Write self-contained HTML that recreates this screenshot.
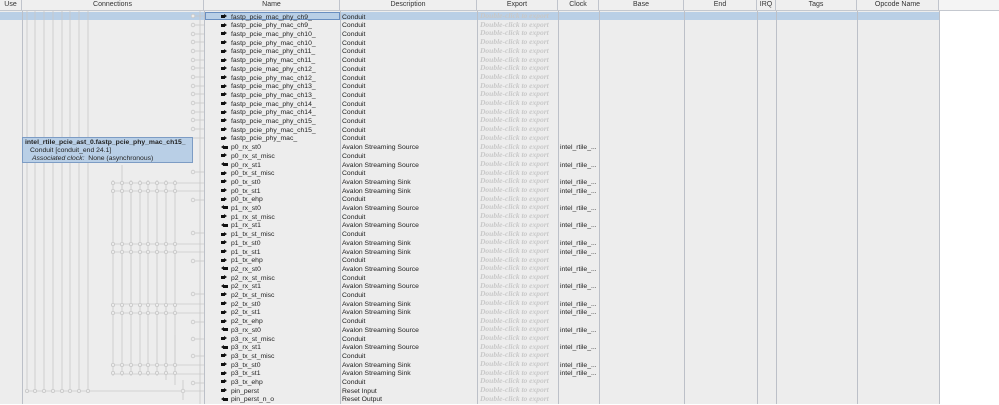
<!DOCTYPE html>
<html><head><meta charset="utf-8"><style>
*{margin:0;padding:0;box-sizing:border-box}
body{width:999px;height:404px;overflow:hidden;background:#fff;font-family:"Liberation Sans","DejaVu Sans",sans-serif;position:relative}
#grid{position:absolute;left:0;top:0;width:939px;height:404px;background:#ededed}
.hdr{position:absolute;top:0;height:11px;background:#efefef;border-bottom:1px solid #c4c8cf;font-size:7px;color:#333;text-align:center;line-height:10px;border-right:1px solid #c0c4cc}
.vl{position:absolute;top:11px;bottom:0;width:1px;background:#bcc0c8}
.r{position:absolute;left:0;width:939px;height:8.7px;font-size:6.8px;line-height:8.7px;color:#222;white-space:nowrap}
.r span{position:absolute;top:2.2px}
.n{left:231px}.d{left:342px}.r span.e{top:0.6px;left:480px;color:#c8c8c8;font-style:italic;font-weight:bold;font-family:"Liberation Serif",serif;font-size:7.5px}.c{left:560px}
.ic{position:absolute;left:221px;top:2.5px;width:7px;height:5px}
.ic::before,.ic::after{content:"";position:absolute}
.ic.o::before{left:0;top:1px;width:4px;height:3px;background:#111}
.ic.o::after{left:3px;top:0;border-left:3px solid #111;border-top:2.5px solid transparent;border-bottom:2.5px solid transparent}
.ic.i::before{left:2px;top:1px;width:5px;height:3px;background:#111}
.ic.i::after{left:0;top:0;border-right:3px solid #111;border-top:2.5px solid transparent;border-bottom:2.5px solid transparent}
</style></head><body>
<div id="grid"></div>
<div class="hdr" style="left:0;width:22px">Use</div>
<div class="hdr" style="left:22px;width:182px">Connections</div>
<div class="hdr" style="left:204px;width:136px">Name</div>
<div class="hdr" style="left:340px;width:137px">Description</div>
<div class="hdr" style="left:477px;width:81px">Export</div>
<div class="hdr" style="left:558px;width:41px">Clock</div>
<div class="hdr" style="left:599px;width:85px">Base</div>
<div class="hdr" style="left:684px;width:73px">End</div>
<div class="hdr" style="left:757px;width:19px">IRQ</div>
<div class="hdr" style="left:776px;width:81px">Tags</div>
<div class="hdr" style="left:857px;width:82px">Opcode Name</div>
<div class="hdr" style="left:939px;width:60px;border-right:none;background:#f4f4f4"></div>
<div style="position:absolute;left:0;top:11.5px;width:939px;height:8.7px;background:#b9cfe6"></div>
<div style="position:absolute;left:205px;top:11.5px;width:135px;height:8.7px;border:1px solid #6a8fc0"></div>
<div class="vl" style="left:22px"></div><div class="vl" style="left:204px"></div><div class="vl" style="left:340px"></div><div class="vl" style="left:477px"></div><div class="vl" style="left:558px"></div><div class="vl" style="left:599px"></div><div class="vl" style="left:684px"></div><div class="vl" style="left:757px"></div><div class="vl" style="left:776px"></div><div class="vl" style="left:857px"></div><div class="vl" style="left:939px"></div>
<svg style="position:absolute;left:0;top:0" width="210" height="404" stroke="#c8c8c8" fill="#ececec" stroke-width="0.8">
<g>
<line x1="27" y1="11" x2="27" y2="391"/><line x1="35" y1="11" x2="35" y2="391"/><line x1="44" y1="11" x2="44" y2="391"/><line x1="53" y1="11" x2="53" y2="391"/><line x1="62" y1="11" x2="62" y2="391"/><line x1="70" y1="11" x2="70" y2="391"/><line x1="79" y1="11" x2="79" y2="391"/><line x1="88" y1="11" x2="88" y2="391"/>
<line x1="113" y1="180" x2="113" y2="376"/><line x1="122" y1="180" x2="122" y2="376"/><line x1="131" y1="180" x2="131" y2="376"/><line x1="140" y1="180" x2="140" y2="376"/><line x1="148" y1="180" x2="148" y2="376"/><line x1="157" y1="180" x2="157" y2="376"/><line x1="166" y1="180" x2="166" y2="376"/><line x1="175" y1="180" x2="175" y2="376"/>
<line x1="122" y1="165" x2="122" y2="290"/><line x1="131" y1="190" x2="131" y2="300"/><line x1="166" y1="330" x2="166" y2="380"/><line x1="175" y1="335" x2="175" y2="385"/><line x1="183" y1="380" x2="183" y2="400"/>
<line x1="200" y1="11" x2="200" y2="404"/>
<line x1="25" y1="391" x2="204" y2="391"/>
<line x1="113" y1="183" x2="204" y2="183"/><line x1="113" y1="191" x2="204" y2="191"/><line x1="113" y1="244" x2="204" y2="244"/><line x1="113" y1="252" x2="204" y2="252"/><line x1="113" y1="304" x2="204" y2="304"/><line x1="113" y1="313" x2="204" y2="313"/><line x1="113" y1="365" x2="204" y2="365"/><line x1="113" y1="374" x2="204" y2="374"/>
<line x1="193" y1="16" x2="204" y2="16"/><line x1="193" y1="25" x2="204" y2="25"/><line x1="193" y1="34" x2="204" y2="34"/><line x1="193" y1="42" x2="204" y2="42"/><line x1="193" y1="51" x2="204" y2="51"/><line x1="193" y1="60" x2="204" y2="60"/><line x1="193" y1="68" x2="204" y2="68"/><line x1="193" y1="77" x2="204" y2="77"/><line x1="193" y1="86" x2="204" y2="86"/><line x1="193" y1="94" x2="204" y2="94"/><line x1="193" y1="103" x2="204" y2="103"/><line x1="193" y1="112" x2="204" y2="112"/><line x1="193" y1="120" x2="204" y2="120"/><line x1="193" y1="129" x2="204" y2="129"/><line x1="193" y1="138" x2="204" y2="138"/><line x1="193" y1="172" x2="204" y2="172"/><line x1="193" y1="200" x2="204" y2="200"/><line x1="193" y1="233" x2="204" y2="233"/><line x1="193" y1="261" x2="204" y2="261"/><line x1="193" y1="294" x2="204" y2="294"/><line x1="193" y1="322" x2="204" y2="322"/><line x1="193" y1="339" x2="204" y2="339"/><line x1="193" y1="356" x2="204" y2="356"/><line x1="193" y1="383" x2="204" y2="383"/>
</g>
<g>
<circle cx="193" cy="16" r="1.8"/><circle cx="193" cy="25" r="1.8"/><circle cx="193" cy="34" r="1.8"/><circle cx="193" cy="42" r="1.8"/><circle cx="193" cy="51" r="1.8"/><circle cx="193" cy="60" r="1.8"/><circle cx="193" cy="68" r="1.8"/><circle cx="193" cy="77" r="1.8"/><circle cx="193" cy="86" r="1.8"/><circle cx="193" cy="94" r="1.8"/><circle cx="193" cy="103" r="1.8"/><circle cx="193" cy="112" r="1.8"/><circle cx="193" cy="120" r="1.8"/><circle cx="193" cy="129" r="1.8"/><circle cx="193" cy="172" r="1.8"/><circle cx="193" cy="200" r="1.8"/><circle cx="193" cy="233" r="1.8"/><circle cx="193" cy="261" r="1.8"/><circle cx="193" cy="294" r="1.8"/><circle cx="193" cy="322" r="1.8"/><circle cx="193" cy="339" r="1.8"/><circle cx="193" cy="356" r="1.8"/><circle cx="193" cy="383" r="1.8"/><circle cx="183" cy="391" r="1.8"/>
<g id="dots">
<circle cx="113" cy="183" r="1.6"/><circle cx="122" cy="183" r="1.6"/><circle cx="131" cy="183" r="1.6"/><circle cx="140" cy="183" r="1.6"/><circle cx="148" cy="183" r="1.6"/><circle cx="157" cy="183" r="1.6"/><circle cx="166" cy="183" r="1.6"/><circle cx="175" cy="183" r="1.6"/>
<circle cx="113" cy="191" r="1.6"/><circle cx="122" cy="191" r="1.6"/><circle cx="131" cy="191" r="1.6"/><circle cx="140" cy="191" r="1.6"/><circle cx="148" cy="191" r="1.6"/><circle cx="157" cy="191" r="1.6"/><circle cx="166" cy="191" r="1.6"/><circle cx="175" cy="191" r="1.6"/>
</g>
<use href="#dots" y="61"/><use href="#dots" y="122"/><use href="#dots" y="182"/>
<circle cx="27" cy="391" r="1.6"/><circle cx="35" cy="391" r="1.6"/><circle cx="44" cy="391" r="1.6"/><circle cx="53" cy="391" r="1.6"/><circle cx="62" cy="391" r="1.6"/><circle cx="70" cy="391" r="1.6"/><circle cx="79" cy="391" r="1.6"/><circle cx="88" cy="391" r="1.6"/>
</g>
</svg>
<div class="r" style="top:11.5px"><i class="ic o"></i><span class="n">fastp_pcie_mac_phy_ch9_</span><span class="d">Conduit</span><span class="e">Double-click to export</span></div>
<div class="r" style="top:20.2px"><i class="ic o"></i><span class="n">fastp_pcie_phy_mac_ch9_</span><span class="d">Conduit</span><span class="e">Double-click to export</span></div>
<div class="r" style="top:28.9px"><i class="ic o"></i><span class="n">fastp_pcie_mac_phy_ch10_</span><span class="d">Conduit</span><span class="e">Double-click to export</span></div>
<div class="r" style="top:37.6px"><i class="ic o"></i><span class="n">fastp_pcie_phy_mac_ch10_</span><span class="d">Conduit</span><span class="e">Double-click to export</span></div>
<div class="r" style="top:46.3px"><i class="ic o"></i><span class="n">fastp_pcie_mac_phy_ch11_</span><span class="d">Conduit</span><span class="e">Double-click to export</span></div>
<div class="r" style="top:55px"><i class="ic o"></i><span class="n">fastp_pcie_phy_mac_ch11_</span><span class="d">Conduit</span><span class="e">Double-click to export</span></div>
<div class="r" style="top:63.7px"><i class="ic o"></i><span class="n">fastp_pcie_mac_phy_ch12_</span><span class="d">Conduit</span><span class="e">Double-click to export</span></div>
<div class="r" style="top:72.4px"><i class="ic o"></i><span class="n">fastp_pcie_phy_mac_ch12_</span><span class="d">Conduit</span><span class="e">Double-click to export</span></div>
<div class="r" style="top:81.1px"><i class="ic o"></i><span class="n">fastp_pcie_mac_phy_ch13_</span><span class="d">Conduit</span><span class="e">Double-click to export</span></div>
<div class="r" style="top:89.8px"><i class="ic o"></i><span class="n">fastp_pcie_phy_mac_ch13_</span><span class="d">Conduit</span><span class="e">Double-click to export</span></div>
<div class="r" style="top:98.5px"><i class="ic o"></i><span class="n">fastp_pcie_mac_phy_ch14_</span><span class="d">Conduit</span><span class="e">Double-click to export</span></div>
<div class="r" style="top:107.2px"><i class="ic o"></i><span class="n">fastp_pcie_phy_mac_ch14_</span><span class="d">Conduit</span><span class="e">Double-click to export</span></div>
<div class="r" style="top:115.9px"><i class="ic o"></i><span class="n">fastp_pcie_mac_phy_ch15_</span><span class="d">Conduit</span><span class="e">Double-click to export</span></div>
<div class="r" style="top:124.6px"><i class="ic o"></i><span class="n">fastp_pcie_phy_mac_ch15_</span><span class="d">Conduit</span><span class="e">Double-click to export</span></div>
<div class="r" style="top:133.3px"><i class="ic o"></i><span class="n">fastp_pcie_phy_mac_</span><span class="d">Conduit</span><span class="e">Double-click to export</span></div>
<div class="r" style="top:142px"><i class="ic i"></i><span class="n">p0_rx_st0</span><span class="d">Avalon Streaming Source</span><span class="e">Double-click to export</span><span class="c">intel_rtile_...</span></div>
<div class="r" style="top:150.7px"><i class="ic o"></i><span class="n">p0_rx_st_misc</span><span class="d">Conduit</span><span class="e">Double-click to export</span></div>
<div class="r" style="top:159.4px"><i class="ic i"></i><span class="n">p0_rx_st1</span><span class="d">Avalon Streaming Source</span><span class="e">Double-click to export</span><span class="c">intel_rtile_...</span></div>
<div class="r" style="top:168.1px"><i class="ic o"></i><span class="n">p0_tx_st_misc</span><span class="d">Conduit</span><span class="e">Double-click to export</span></div>
<div class="r" style="top:176.8px"><i class="ic o"></i><span class="n">p0_tx_st0</span><span class="d">Avalon Streaming Sink</span><span class="e">Double-click to export</span><span class="c">intel_rtile_...</span></div>
<div class="r" style="top:185.5px"><i class="ic o"></i><span class="n">p0_tx_st1</span><span class="d">Avalon Streaming Sink</span><span class="e">Double-click to export</span><span class="c">intel_rtile_...</span></div>
<div class="r" style="top:194.2px"><i class="ic o"></i><span class="n">p0_tx_ehp</span><span class="d">Conduit</span><span class="e">Double-click to export</span></div>
<div class="r" style="top:202.9px"><i class="ic i"></i><span class="n">p1_rx_st0</span><span class="d">Avalon Streaming Source</span><span class="e">Double-click to export</span><span class="c">intel_rtile_...</span></div>
<div class="r" style="top:211.6px"><i class="ic o"></i><span class="n">p1_rx_st_misc</span><span class="d">Conduit</span><span class="e">Double-click to export</span></div>
<div class="r" style="top:220.3px"><i class="ic i"></i><span class="n">p1_rx_st1</span><span class="d">Avalon Streaming Source</span><span class="e">Double-click to export</span><span class="c">intel_rtile_...</span></div>
<div class="r" style="top:229px"><i class="ic o"></i><span class="n">p1_tx_st_misc</span><span class="d">Conduit</span><span class="e">Double-click to export</span></div>
<div class="r" style="top:237.7px"><i class="ic o"></i><span class="n">p1_tx_st0</span><span class="d">Avalon Streaming Sink</span><span class="e">Double-click to export</span><span class="c">intel_rtile_...</span></div>
<div class="r" style="top:246.4px"><i class="ic o"></i><span class="n">p1_tx_st1</span><span class="d">Avalon Streaming Sink</span><span class="e">Double-click to export</span><span class="c">intel_rtile_...</span></div>
<div class="r" style="top:255.1px"><i class="ic o"></i><span class="n">p1_tx_ehp</span><span class="d">Conduit</span><span class="e">Double-click to export</span></div>
<div class="r" style="top:263.8px"><i class="ic i"></i><span class="n">p2_rx_st0</span><span class="d">Avalon Streaming Source</span><span class="e">Double-click to export</span><span class="c">intel_rtile_...</span></div>
<div class="r" style="top:272.5px"><i class="ic o"></i><span class="n">p2_rx_st_misc</span><span class="d">Conduit</span><span class="e">Double-click to export</span></div>
<div class="r" style="top:281.2px"><i class="ic i"></i><span class="n">p2_rx_st1</span><span class="d">Avalon Streaming Source</span><span class="e">Double-click to export</span><span class="c">intel_rtile_...</span></div>
<div class="r" style="top:289.9px"><i class="ic o"></i><span class="n">p2_tx_st_misc</span><span class="d">Conduit</span><span class="e">Double-click to export</span></div>
<div class="r" style="top:298.6px"><i class="ic o"></i><span class="n">p2_tx_st0</span><span class="d">Avalon Streaming Sink</span><span class="e">Double-click to export</span><span class="c">intel_rtile_...</span></div>
<div class="r" style="top:307.3px"><i class="ic o"></i><span class="n">p2_tx_st1</span><span class="d">Avalon Streaming Sink</span><span class="e">Double-click to export</span><span class="c">intel_rtile_...</span></div>
<div class="r" style="top:316px"><i class="ic o"></i><span class="n">p2_tx_ehp</span><span class="d">Conduit</span><span class="e">Double-click to export</span></div>
<div class="r" style="top:324.7px"><i class="ic i"></i><span class="n">p3_rx_st0</span><span class="d">Avalon Streaming Source</span><span class="e">Double-click to export</span><span class="c">intel_rtile_...</span></div>
<div class="r" style="top:333.4px"><i class="ic o"></i><span class="n">p3_rx_st_misc</span><span class="d">Conduit</span><span class="e">Double-click to export</span></div>
<div class="r" style="top:342.1px"><i class="ic i"></i><span class="n">p3_rx_st1</span><span class="d">Avalon Streaming Source</span><span class="e">Double-click to export</span><span class="c">intel_rtile_...</span></div>
<div class="r" style="top:350.8px"><i class="ic o"></i><span class="n">p3_tx_st_misc</span><span class="d">Conduit</span><span class="e">Double-click to export</span></div>
<div class="r" style="top:359.5px"><i class="ic o"></i><span class="n">p3_tx_st0</span><span class="d">Avalon Streaming Sink</span><span class="e">Double-click to export</span><span class="c">intel_rtile_...</span></div>
<div class="r" style="top:368.2px"><i class="ic o"></i><span class="n">p3_tx_st1</span><span class="d">Avalon Streaming Sink</span><span class="e">Double-click to export</span><span class="c">intel_rtile_...</span></div>
<div class="r" style="top:376.9px"><i class="ic o"></i><span class="n">p3_tx_ehp</span><span class="d">Conduit</span><span class="e">Double-click to export</span></div>
<div class="r" style="top:385.6px"><i class="ic o"></i><span class="n">pin_perst</span><span class="d">Reset Input</span><span class="e">Double-click to export</span></div>
<div class="r" style="top:394.3px"><i class="ic i"></i><span class="n">pin_perst_n_o</span><span class="d">Reset Output</span><span class="e">Double-click to export</span></div>
<div style="position:absolute;left:22px;top:137px;width:171px;height:26px;background:#b9cfe6;border:1px solid #7d9cc4;font-size:6.8px;line-height:8px;padding:1px 2px 0;color:#222">
<div style="font-weight:bold">intel_rtile_pcie_ast_0.fastp_pcie_phy_mac_ch15_</div>
<div style="padding-left:5px">Conduit [conduit_end 24.1]</div>
<div style="padding-left:7px"><i>Associated clock:</i>&nbsp; None (asynchronous)</div>
</div>
</body></html>
